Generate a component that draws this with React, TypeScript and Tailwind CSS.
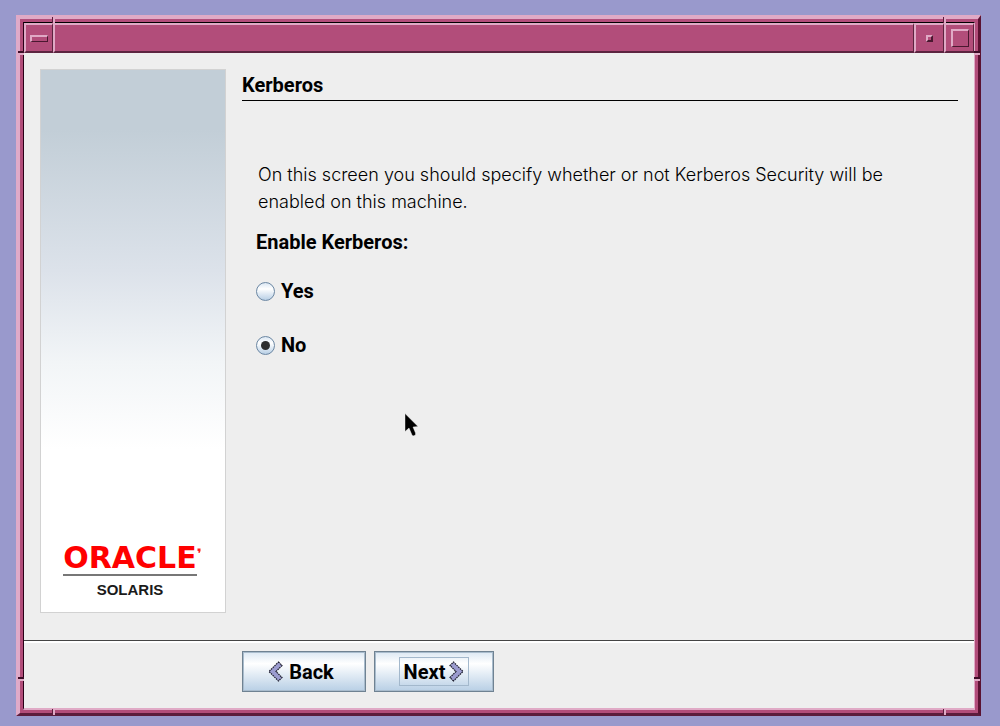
import React from "react";

function Chevron({ flip = false }: { flip?: boolean }) {
  return (
    <svg
      width="15"
      height="21"
      viewBox="0 0 15 21"
      aria-hidden="true"
      className={flip ? "rotate-180" : undefined}
    >
      <path
        d="M10.5 1 L14 4.5 L8 10.5 L14 16.5 L10.5 20 L1 10.5 Z"
        fill="#9c9cd0"
      />
      <path
        d="M10.5 1 L14 4.5 L8 10.5 L14 16.5 L10.5 20 L1 10.5 Z"
        fill="none"
        stroke="#1c1c2c"
        strokeWidth="1.2"
        strokeDasharray="1.6 0.8"
      />
    </svg>
  );
}

function Pointer() {
  return (
    <svg
      width="15"
      height="24"
      viewBox="0 0 15 24"
      aria-hidden="true"
      className="pointer-events-none absolute left-[380px] top-[360px]"
    >
      <path
        d="M1 0.5 L1 18.5 L5 15 L8 22 L9 23 L11.5 22 L11.5 20 L9 14 L14 13.5 Z"
        fill="#000"
        stroke="#fafafa"
        strokeWidth="0.4"
      />
    </svg>
  );
}

function Choice({ label, value, checked = false }: { label: string; value: string; checked?: boolean }) {
  return (
    <label className="flex items-center gap-1.5 text-xl leading-6 font-bold">
      <input
        type="radio"
        name="kerberos"
        value={value}
        defaultChecked={checked}
        className="relative size-[19px] appearance-none rounded-full border border-[#6b87a3] bg-linear-to-b from-[#dbe7f3] via-white via-35% to-[#b8cfe5] before:absolute before:inset-1 before:rounded-full checked:before:bg-[#2e2e2e]"
      />
      {label}
    </label>
  );
}

function FrameNotches() {
  const across = "absolute h-1 w-1.5 border-t-2 border-t-[#3d0d27] border-b-2 border-b-[#e0aac6]";
  const down = "absolute h-1.5 w-[3px] border-l border-l-[#5c1c3c] border-r-2 border-r-[#e0aac6]";
  return (
    <div aria-hidden="true">
      <span className={`${across} -left-0.5 top-8`} />
      <span className={`${across} -right-0.5 top-8`} />
      <span className={`${across} bottom-8 -left-0.5`} />
      <span className={`${across} bottom-8 -right-0.5`} />
      <span className={`${down} -top-0.5 left-8`} />
      <span className={`${down} -top-0.5 right-8`} />
      <span className={`${down} -bottom-0.5 left-8`} />
      <span className={`${down} -bottom-0.5 right-8`} />
    </div>
  );
}

const titleCell =
  "flex items-center justify-center border-t-2 border-b-2 border-l-2 border-r border-t-[#e0aac6] border-l-[#e0aac6] border-b-[#5c2440] border-r-[#5c2440] bg-[#b24d7a]";

function TitleBar() {
  return (
    <header className="flex h-[30px]">
      <button type="button" aria-label="Window menu" className={`${titleCell} w-[29px]`}>
        <span className="h-[7px] w-[18px] border border-t-2 border-l-2 border-t-[#e0aac6] border-l-[#e0aac6] border-b-[#4a1830] border-r-[#4a1830]" />
      </button>
      <div className={`${titleCell} flex-1`} />
      <button type="button" aria-label="Minimize" className={`${titleCell} w-[30px]`}>
        <span className="size-[7px] border-2 border-t-[#e0aac6] border-l-[#e0aac6] border-b-[#4a1830] border-r-[#4a1830]" />
      </button>
      <button type="button" aria-label="Maximize" className={`${titleCell} w-[30px]`}>
        <span className="size-[18px] border border-t-2 border-l-2 border-t-[#e0aac6] border-l-[#e0aac6] border-b-[#4a1830] border-r-[#4a1830]" />
      </button>
    </header>
  );
}

function BrandPanel() {
  return (
    <aside className="flex w-[186px] shrink-0 flex-col justify-end border border-[#d2d2d2] bg-[linear-gradient(to_bottom,#c2ced7_0%,#c2ced7_11%,#dce2ea_37%,#f2f5f7_54%,#ffffff_70%)] pb-3 pl-[22px]">
      <div className="w-[134px] text-center">
        <div className="relative flex justify-center">
          <span className="font-['DejaVu_Sans'] text-[30px] leading-7 font-bold text-[#ff0000]">ORACLE</span>
          <svg width="4" height="6" viewBox="0 0 4 6" aria-hidden="true" className="absolute top-1 -right-1">
            <path d="M0.5 0.5 H3.5 V3 L2.5 5 H1.5 V3 H0.5 Z" fill="#ff2020" />
          </svg>
        </div>
        <div className="mt-0.5 mb-1 h-0.5 bg-[#777777]" />
        <div className="text-[15px] leading-5 font-bold text-[#1a1a1a] font-['Liberation_Sans']">SOLARIS</div>
      </div>
    </aside>
  );
}

const navButton =
  "flex h-[41px] items-center justify-center border border-[#6f8292] bg-linear-to-b from-[#dce8f3] via-white via-30% to-[#b8cfe5] text-xl font-bold shadow-[inset_0_0_0_1px_#a9bccd]";

export default function App() {
  return (
    <div className="flex min-h-screen bg-[#9999cc] pt-[15px] pr-[19px] pb-2.5 pl-4 font-[Roboto,'Liberation_Sans',sans-serif] text-black">
      <div className="relative flex flex-1 border-t-4 border-r-[3px] border-b-[3px] border-l-4 border-t-[#e0aac6] border-l-[#dfaac8] border-r-[#5a1232] border-b-[#5c1c3c]">
        <div className="flex flex-1 border-3 border-[#b24d7a]">
          <div className="flex flex-1 flex-col border-t border-r border-b-2 border-l border-t-black border-l-[#2a0018] border-r-[#e0aac6] border-b-[#e0aac6] bg-[#eeeeee]">
            <TitleBar />
            <div className="relative flex flex-1 flex-col">
              <main className="flex flex-1 gap-4 px-4 pt-4 pb-[27px]">
                <BrandPanel />
                <section className="flex-1">
                  <h1 className="border-b border-black pt-px text-xl leading-[30px] font-bold">Kerberos</h1>
                  <form className="px-3.5 pt-[60px]">
                    <p className="px-0.5 font-[Inter,'Liberation_Sans',sans-serif] text-lg leading-[27px] font-light">
                      On this screen you should specify whether or not Kerberos Security will be enabled on this machine.
                    </p>
                    <fieldset className="pt-[15px]">
                      <legend className="contents text-xl leading-6 font-bold">Enable Kerberos:</legend>
                      <div className="flex flex-col gap-[30px] pt-[23px]">
                        <Choice label="Yes" value="yes" />
                        <Choice label="No" value="no" checked />
                      </div>
                    </fieldset>
                  </form>
                </section>
              </main>
              <footer className="flex gap-2 border-t border-[#444444] pt-2.5 pb-4 pl-[218px] shadow-[inset_0_2px_0_#ffffff]">
                <button type="button" className={`${navButton} w-[124px] gap-1.5 pr-1.5`}>
                  <Chevron />
                  Back
                </button>
                <button type="button" className={`${navButton} w-[120px]`}>
                  <span className="flex h-[29px] items-center gap-1 border border-[#a3b8cc] px-1">
                    Next
                    <Chevron flip />
                  </span>
                </button>
              </footer>
              <Pointer />
            </div>
          </div>
        </div>
        <FrameNotches />
      </div>
    </div>
  );
}
